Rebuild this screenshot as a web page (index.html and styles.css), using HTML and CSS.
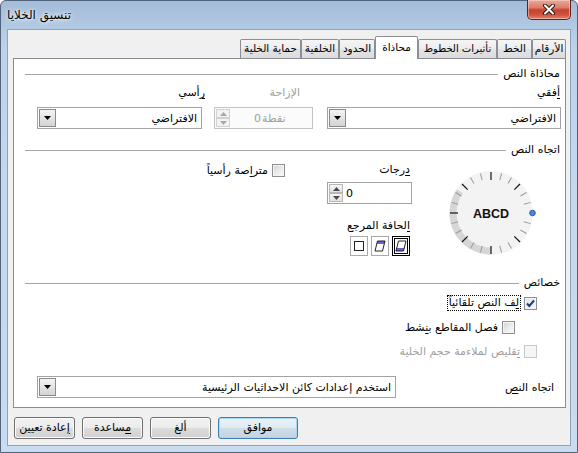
FILE: index.html
```html
<!DOCTYPE html>
<html lang="ar">
<head>
<meta charset="utf-8">
<title>تنسيق الخلايا</title>
<link rel="stylesheet" href="styles.css">
</head>
<body>
<div class="window">
  <div class="titlebar">
    <span class="title">تنسيق الخلايا</span>
    <div class="close">
      <svg width="14" height="11" viewBox="0 0 14 11">
        <path d="M3 1.5 L11 9.5 M11 1.5 L3 9.5" stroke="#3b1a14" stroke-width="4" stroke-linecap="round" fill="none"/>
        <path d="M3 1.5 L11 9.5 M11 1.5 L3 9.5" stroke="#ffffff" stroke-width="2" stroke-linecap="round" fill="none"/>
      </svg>
    </div>
  </div>
  <div class="client">
    <div class="tabs" dir="rtl">
      <div class="tab t1">الأرقام</div>
      <div class="tab t2">الخط</div>
      <div class="tab t3">تأثيرات الخطوط</div>
      <div class="tab sel t4">محاذاة</div>
      <div class="tab t5">الحدود</div>
      <div class="tab t6">الخلفية</div>
      <div class="tab t7">حماية الخلية</div>
    </div>
    <div class="panel" dir="rtl">
      <div class="sec-head first"><span class="sec-label">محاذاة النص</span><span class="sec-line"></span></div>
      <div class="align-row">
        <div class="col c1">
          <div class="lbl"><u>أ</u>فقي</div>
          <div class="combo field"><span class="combo-text">الافتراضي</span><span class="combo-btn"><svg width="7" height="4" viewBox="0 0 7 4"><path d="M0 0 H7 L3.5 4Z" fill="#000"/></svg></span></div>
        </div>
        <div class="col c2">
          <div class="lbl dis">الإزاحة</div>
          <div class="spin field disabled" dir="ltr">
            <span class="spin-btns"><span class="sb"><svg width="7" height="4" viewBox="0 0 7 4"><path d="M0 4 L3.5 0 L7 4Z" fill="#a8a8a8"/></svg></span><span class="sb"><svg width="7" height="4" viewBox="0 0 7 4"><path d="M0 0 H7 L3.5 4Z" fill="#a8a8a8"/></svg></span></span>
            <span class="spin-text">0</span><span class="unit">نقطة</span>
          </div>
        </div>
        <div class="col c3">
          <div class="lbl"><u>ر</u>أسي</div>
          <div class="combo field"><span class="combo-text">الافتراضي</span><span class="combo-btn"><svg width="7" height="4" viewBox="0 0 7 4"><path d="M0 0 H7 L3.5 4Z" fill="#000"/></svg></span></div>
        </div>
      </div>

      <div class="sec-head second"><span class="sec-label">اتجاه النص</span><span class="sec-line"></span></div>
      <div class="dir-body">
        <svg class="dial" width="90" height="90" viewBox="0 0 90 90">
          <circle cx="45" cy="45" r="42" fill="#f3f3f3"/>
          <path d="M45 83 A38 38 0 0 1 13.9 23.2" fill="none" stroke="#d6d6d6" stroke-width="7"/>
          <g stroke="#9a9a9a" stroke-width="1">
            <line x1="79" y1="45" x2="86" y2="45" transform="rotate(15 45 45)"/>
            <line x1="79" y1="45" x2="86" y2="45" transform="rotate(30 45 45)"/>
            <line x1="79" y1="45" x2="86" y2="45" transform="rotate(60 45 45)"/>
            <line x1="79" y1="45" x2="86" y2="45" transform="rotate(75 45 45)"/>
            <line x1="79" y1="45" x2="86" y2="45" transform="rotate(105 45 45)"/>
            <line x1="79" y1="45" x2="86" y2="45" transform="rotate(120 45 45)"/>
            <line x1="79" y1="45" x2="86" y2="45" transform="rotate(150 45 45)"/>
            <line x1="79" y1="45" x2="86" y2="45" transform="rotate(165 45 45)"/>
            <line x1="79" y1="45" x2="86" y2="45" transform="rotate(195 45 45)"/>
            <line x1="79" y1="45" x2="86" y2="45" transform="rotate(210 45 45)"/>
            <line x1="79" y1="45" x2="86" y2="45" transform="rotate(240 45 45)"/>
            <line x1="79" y1="45" x2="86" y2="45" transform="rotate(255 45 45)"/>
            <line x1="79" y1="45" x2="86" y2="45" transform="rotate(285 45 45)"/>
            <line x1="79" y1="45" x2="86" y2="45" transform="rotate(300 45 45)"/>
            <line x1="79" y1="45" x2="86" y2="45" transform="rotate(330 45 45)"/>
            <line x1="79" y1="45" x2="86" y2="45" transform="rotate(345 45 45)"/>
          </g>
          <g stroke="#111" stroke-width="1.2">
            <line x1="78" y1="45" x2="86" y2="45" transform="rotate(45 45 45)"/>
            <line x1="78" y1="45" x2="86" y2="45" transform="rotate(90 45 45)"/>
            <line x1="78" y1="45" x2="86" y2="45" transform="rotate(135 45 45)"/>
            <line x1="78" y1="45" x2="86" y2="45" transform="rotate(180 45 45)"/>
            <line x1="78" y1="45" x2="86" y2="45" transform="rotate(225 45 45)"/>
            <line x1="78" y1="45" x2="86" y2="45" transform="rotate(270 45 45)"/>
            <line x1="78" y1="45" x2="86" y2="45" transform="rotate(315 45 45)"/>
          </g>
          <text x="45" y="49.5" text-anchor="middle" class="abcd">ABCD</text>
          <circle cx="86.5" cy="45" r="2.8" fill="#4f86d9" stroke="#2d5ea8" stroke-width="1"/>
        </svg>
        <div class="mid">
          <div class="lbl deg-lbl"><u>د</u>رجات</div>
          <div class="spin deg" dir="ltr">
            <span class="spin-btns"><span class="sb"><svg width="7" height="4" viewBox="0 0 7 4"><path d="M0 4 L3.5 0 L7 4Z" fill="#4a4a4a"/></svg></span><span class="sb"><svg width="7" height="4" viewBox="0 0 7 4"><path d="M0 0 H7 L3.5 4Z" fill="#4a4a4a"/></svg></span></span>
            <span class="spin-text">0</span>
          </div>
          <div class="lbl edge-lbl"><u>ا</u>لحافة المرجع</div>
          <div class="edges">
            <span class="edge sel"><svg width="12" height="12" viewBox="0 0 12 12"><path d="M1.5 8 H9.3 L8.5 11 H0.7 Z" fill="#6a5fd3"/><path d="M3.5 1 H11 L8.5 11 H1 Z" fill="none" stroke="#222" stroke-width="1"/></svg></span>
            <span class="edge"><svg width="12" height="12" viewBox="0 0 12 12"><path d="M3.5 1 H11 L10.2 4 H2.7 Z" fill="#6a5fd3"/><path d="M3.5 1 H11 L8.5 11 H1 Z" fill="none" stroke="#222" stroke-width="1"/></svg></span>
            <span class="edge"><svg width="12" height="12" viewBox="0 0 12 12"><rect x="1.5" y="1.5" width="9" height="9" fill="none" stroke="#222" stroke-width="1"/></svg></span>
          </div>
        </div>
        <div class="stack">
          <div class="opt"><span class="cb"></span><span>متر<u>ا</u>صة رأسياً</span></div>
        </div>
      </div>

      <div class="sec-head third"><span class="sec-label">خصائص</span><span class="sec-line"></span></div>
      <div class="opt o1"><span class="cb checked"><svg width="11" height="11" viewBox="0 0 11 11"><path d="M2 5.5 L4.3 8 L9 2.5" fill="none" stroke="#1f3b70" stroke-width="2"/></svg></span><span class="focus"><u>ل</u>ف النص تلقائياً</span></div>
      <div class="opt o2"><span class="cb"></span><span>فصل المقاطع ب<u>ن</u>شط</span></div>
      <div class="opt o3 dis"><span class="cb disabled"></span><span><u>ت</u>قليص لملاءمة حجم الخلية</span></div>

      <div class="textdir">
        <div class="td-lbl">اتجاه الن<u>ص</u></div>
        <div class="combo td-combo"><span class="combo-text">استخدم إعدادات كائن الاحداثيات الرئيسية</span><span class="combo-btn"><svg width="7" height="4" viewBox="0 0 7 4"><path d="M0 0 H7 L3.5 4Z" fill="#000"/></svg></span></div>
      </div>
    </div>
    <div class="buttons">
      <div class="btn b-reset"><u>إ</u>عادة تعيين</div>
      <div class="btn b-help"><u>م</u>ساعدة</div>
      <div class="btn b-cancel">ألغ</div>
      <div class="btn def b-ok">موافق</div>
    </div>
  </div>
</div>
</body>
</html>
```

FILE: styles.css
```css
* { box-sizing: border-box; }
html, body { margin: 0; padding: 0; }
body {
  width: 578px;
  height: 453px;
  overflow: hidden;
  font-family: "DejaVu Sans", "Noto Sans", sans-serif;
  font-size: 11px;
  color: #000;
  background: #fff;
}
u { text-decoration-thickness: 1px; text-underline-offset: 2px; }

.window {
  width: 578px;
  height: 453px;
  border: 1px solid #52647b;
  border-radius: 6px 6px 0 0;
  background: linear-gradient(180deg, #a3bcd8 0%, #bcd2ea 10%, #c4d9ee 45%, #c8dbef 100%);
  display: flex;
  flex-direction: column;
}

.titlebar {
  height: 28px;
  display: flex;
  align-items: flex-start;
  flex: none;
}
.title {
  margin-left: 6px;
  margin-top: 6px;
  font-size: 12px;
  line-height: 16px;
  text-shadow: 0 0 6px #fff, 0 0 3px #fff;
}
.close {
  margin-left: auto;
  margin-right: 6px;
  margin-top: -1px;
  width: 44px;
  height: 20px;
  border: 1px solid #5e241b;
  border-top: none;
  border-radius: 0 0 5px 5px;
  background: linear-gradient(180deg, #e9a99c 0%, #dc7d6c 40%, #c8432f 52%, #cd4f3a 75%, #e0836b 100%);
  box-shadow: inset 0 0 0 1px rgba(255, 220, 210, 0.5);
  display: flex;
  align-items: center;
  justify-content: center;
}

.client {
  margin: 0 6px 6px 6px;
  height: 417px;
  border: 1px solid #8ea2bb;
  background: #f0f0f0;
  padding: 6px 4px 0 5px;
}

.tabs {
  display: flex;
  height: 22px;
  align-items: flex-end;
}
.tab {
  height: 19px;
  border: 1px solid #8c8e94;
  border-bottom: none;
  border-radius: 2px 2px 0 0;
  background: linear-gradient(180deg, #f5f5f5 0%, #ececec 50%, #e3e3e3 51%, #dcdcdc 100%);
  text-align: center;
  font-size: 10.5px;
  line-height: 17px;
  white-space: nowrap;
  overflow: hidden;
  flex: none;
}
.tab.sel {
  height: 23px;
  margin-bottom: -1px;
  background: #fff;
  line-height: 20px;
  position: relative;
  z-index: 1;
}
.t1 { width: 34px; }
.t2 { width: 35px; }
.t3 { width: 79px; font-size: 10px; }
.t4 { width: 43px; }
.t5 { width: 36px; }
.t6 { width: 38px; }
.t7 { width: 61px; }

.panel {
  height: 350px;
  border: 1px solid #898c95;
  background: #fff;
}

.sec-head {
  display: flex;
  align-items: center;
  height: 14px;
  margin-right: 5px;
  margin-left: 11px;
}
.sec-head.first { margin-top: 8px; }
.sec-head.second { margin-top: 14px; }
.sec-label { white-space: nowrap; line-height: 14px; }
.sec-line {
  flex: 1;
  height: 1px;
  background: #a5a5a5;
  margin-right: 5px;
}

.lbl {
  height: 14px;
  line-height: 14px;
  white-space: nowrap;
}
.dis { color: #a0a0a0; }

.align-row {
  display: flex;
  margin-top: 5px;
  padding-right: 4px;
}
.col { flex: none; }
.c1 { width: 234px; }
.c1 .lbl { padding-right: 1px; }
.c2 { width: 99px; margin-right: 14px; }
.c2 .lbl { padding-right: 13px; }
.c3 { width: 165px; margin-right: 12px; }
.c3 .lbl { margin-right: -3px; }
.field { margin-top: 7px; }

.combo {
  height: 22px;
  border: 1px solid #a3a3a3;
  background: #fff;
  display: flex;
  align-items: center;
  justify-content: space-between;
  padding: 0 1px;
}
.combo-text {
  padding-right: 3px;
  white-space: nowrap;
}
.combo-btn {
  width: 17px;
  height: 18px;
  border: 1px solid #8a8a8a;
  background: linear-gradient(180deg, #f4f4f4 0%, #e4e4e4 50%, #d3d3d3 100%);
  display: flex;
  align-items: center;
  justify-content: center;
  flex: none;
}

.spin {
  height: 22px;
  border: 1px solid #a3a3a3;
  background: #fff;
  display: flex;
  align-items: center;
  padding: 0 1px;
}
.spin.disabled {
  border-color: #c3c3c3;
  color: #a0a0a0;
  background: #fbfbfb;
}
.spin-btns {
  display: flex;
  flex-direction: column;
  width: 14px;
  height: 18px;
  flex: none;
}
.sb {
  flex: 1;
  border: 1px solid #b7b7b7;
  background: linear-gradient(180deg, #f7f7f7, #e0e0e0);
  display: flex;
  align-items: center;
  justify-content: center;
}
.spin.disabled .sb { border-color: #d2d2d2; background: #f3f3f3; }
.spin-text { padding-left: 3px; white-space: nowrap; }
.spin.disabled .spin-text { padding-left: 24px; }
.unit { white-space: nowrap; margin-left: 1px; }

.dir-body {
  display: flex;
  height: 119px;
  padding-right: 29px;
}
.dial { flex: none; margin-top: 11px; }
.abcd {
  font-family: "Liberation Sans", Arial, sans-serif;
  font-weight: bold;
  font-size: 12.5px;
  fill: #111;
}
.mid {
  width: 85px;
  margin-right: 34px;
  flex: none;
}
.deg-lbl { margin-top: 6px; padding-right: 2px; }
.deg { margin-top: 5px; }
.edge-lbl { margin-top: 15px; padding-right: 2px; }
.edges {
  display: flex;
  gap: 3px;
  margin-top: 3px;
  padding-right: 2px;
}
.edge {
  width: 18px;
  height: 20px;
  border: 1px solid #a9a9a9;
  background: #fff;
  display: flex;
  align-items: center;
  justify-content: center;
}
.edge.sel { border: 3px double #000; }

.stack { margin-right: 42px; margin-top: 4px; }

.opt {
  display: flex;
  align-items: center;
  gap: 4px;
  height: 18px;
  white-space: nowrap;
}
.cb {
  width: 13px;
  height: 13px;
  flex: none;
  border: 1px solid #8e8f8f;
  background: linear-gradient(135deg, #d2d2d2 0%, #eeeeee 60%, #fbfbfb 100%);
  box-shadow: inset 0 0 0 1px #f4f4f4;
  display: flex;
  align-items: center;
  justify-content: center;
}
.cb.checked { background: linear-gradient(135deg, #dde6f0 0%, #f4f7fa 100%); }
.cb.disabled { border-color: #c8c8c8; background: #f5f5f5; box-shadow: none; }
.focus { outline: 1px dotted #000; outline-offset: 0; padding: 0 1px; line-height: 14px; }

.o1 { margin-top: 4px; margin-right: 28px; }
.o2 { margin-top: 6px; margin-right: 50px; }
.o3 { margin-top: 6px; margin-right: 28px; }

.textdir {
  display: flex;
  align-items: center;
  margin-top: 16px;
}
.td-lbl {
  width: 169px;
  padding-right: 11px;
  white-space: nowrap;
  flex: none;
}
.td-combo { width: 359px; flex: none; }

.buttons {
  display: flex;
  margin-top: 9px;
  padding-left: 1px;
  gap: 7px;
}
.btn {
  width: 61px;
  height: 22px;
  border: 1px solid #707070;
  border-radius: 3px;
  background: linear-gradient(180deg, #f2f2f2 0%, #ebebeb 50%, #dddddd 51%, #cfcfcf 100%);
  box-shadow: inset 0 0 0 1px #fbfbfb;
  text-align: center;
  line-height: 19px;
  white-space: nowrap;
  direction: rtl;
}
.btn.def {
  width: 80px;
  border-color: #3c7fb1;
  background: linear-gradient(180deg, #eaf2f8 0%, #dfeaf2 50%, #cfdde8 51%, #c3d3e0 100%);
  box-shadow: inset 0 0 0 1px #a9d6f2;
}
```
